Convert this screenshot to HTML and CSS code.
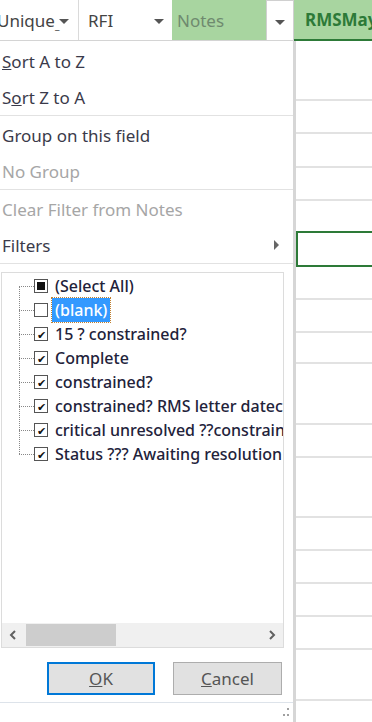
FILE: index.html
```html
<!DOCTYPE html>
<html>
<head>
    <title>Notes filter</title>
    <link rel="stylesheet" href="styles.css">
</head>
<body>
    <div class="header">
        <div class="hcell h-unique"><span class="htext">Unique<span class="cut">_</span></span><span class="arrow"></span></div>
        <div class="hcell h-rfi"><span class="htext">RFI</span><span class="arrow"></span></div>
        <div class="hcell h-notes"><span class="htext">Notes</span></div>
        <div class="hbtn"><span class="arrow"></span></div>
        <div class="hcell h-rms"><span class="htext">RMSMay</span></div>
    </div>

    <div class="main">
        <div class="menu">
            <div class="item"><u>S</u>ort A to Z</div>
            <div class="item">S<u>o</u>rt Z to A</div>
            <div class="sep"></div>
            <div class="item">Group on this field</div>
            <div class="item disabled">No Group</div>
            <div class="sep"></div>
            <div class="item disabled">Clear Filter from Notes</div>
            <div class="item has-sub">Filters <span class="sub-arrow"></span></div>
            <div class="sep"></div>

            <div class="listbox">
                <div class="tree">
                    <div class="node"><span class="box"><span class="partial"></span></span><span class="label">(Select All)</span></div>
                    <div class="node"><span class="box"></span><span class="label selected">(blank)</span></div>
                    <div class="node"><span class="box checked">&#10004;</span><span class="label">15 ? constrained?</span></div>
                    <div class="node"><span class="box checked">&#10004;</span><span class="label">Complete</span></div>
                    <div class="node"><span class="box checked">&#10004;</span><span class="label">constrained?</span></div>
                    <div class="node"><span class="box checked">&#10004;</span><span class="label">constrained? RMS letter datec</span></div>
                    <div class="node"><span class="box checked">&#10004;</span><span class="label">critical unresolved ??constrain</span></div>
                    <div class="node"><span class="box checked">&#10004;</span><span class="label">Status ??? Awaiting resolution</span></div>
                </div>
                <div class="hscroll">
                    <span class="sarrow">
                        <svg width="10" height="10" viewBox="0 0 10 10"><path d="M7 1 L3 5 L7 9" fill="none" stroke="#606060" stroke-width="2"/></svg>
                    </span>
                    <div class="track"><div class="thumb"></div></div>
                    <span class="sarrow">
                        <svg width="10" height="10" viewBox="0 0 10 10"><path d="M3 1 L7 5 L3 9" fill="none" stroke="#606060" stroke-width="2"/></svg>
                    </span>
                </div>
            </div>

            <div class="buttons">
                <button class="btn btn-ok"><u>O</u>K</button>
                <button class="btn"><u>C</u>ancel</button>
            </div>
            <div class="grip">
                <svg width="10" height="10" viewBox="0 0 10 10">
                    <rect x="7" y="0" width="2" height="2" fill="#a0a0a0"/>
                    <rect x="3" y="6" width="2" height="2" fill="#a0a0a0"/>
                    <rect x="7" y="6" width="2" height="2" fill="#a0a0a0"/>
                </svg>
            </div>
        </div>

        <div class="grid">
            <div class="row" style="height:60px"></div>
            <div class="row" style="height:33px"></div>
            <div class="row" style="height:34px"></div>
            <div class="row" style="height:33px"></div>
            <div class="row" style="height:32px"></div>
            <div class="row active" style="height:36px"></div>
            <div class="row" style="height:33px"></div>
            <div class="row" style="height:33px"></div>
            <div class="row" style="height:31px"></div>
            <div class="row" style="height:61px"></div>
            <div class="row" style="height:33px"></div>
            <div class="row" style="height:60px"></div>
            <div class="row" style="height:33px"></div>
            <div class="row" style="height:33px"></div>
            <div class="row" style="height:33px"></div>
            <div class="row" style="height:33px"></div>
            <div class="row" style="height:51px"></div>
            <div class="row last"></div>
        </div>
    </div>
</body>
</html>
```

FILE: styles.css
```css
* {
    box-sizing: border-box;
}
body {
    margin: 0;
    width: 372px;
    height: 722px;
    overflow: hidden;
    background: #fff;
    font-family: "Noto Sans", "Open Sans", sans-serif;
    color: #333;
}

/* column headers */
.header {
    display: flex;
    height: 41px;
    border-bottom: 1px solid #d4d4d4;
    white-space: nowrap;
}
.hcell {
    display: flex;
    align-items: center;
    flex-shrink: 0;
    font-size: 17px;
    color: #444;
    overflow: hidden;
}
.h-unique {
    width: 79px;
    border-right: 1px solid #dadada;
    justify-content: space-between;
    padding-right: 9px;
}
.h-unique .htext {
    margin-left: -3px;
}
.cut {
    font-size: 10px;
    vertical-align: bottom;
}
.h-rfi {
    width: 93px;
    padding: 0 8px 0 9px;
    justify-content: space-between;
}
.h-notes {
    width: 94px;
    background: #a8d5a0;
    padding-left: 5px;
    color: #6f8a6f;
}
.hbtn {
    width: 28px;
    flex-shrink: 0;
    display: flex;
    align-items: center;
    justify-content: center;
    border: 1px solid #d0d0d0;
    border-bottom: none;
    background: #fff;
}
.h-rms {
    flex: 1;
    background: #a8d5a0;
    padding-left: 11px;
    color: #2d7a38;
    font-weight: bold;
    border-bottom: 2px solid #2d7a38;
    margin-bottom: -1px;
}
.arrow {
    width: 0;
    height: 0;
    border-left: 5px solid transparent;
    border-right: 5px solid transparent;
    border-top: 5px solid #555;
    margin-top: 3px;
}

.main {
    display: flex;
    height: 681px;
}

/* filter menu */
.menu {
    width: 296px;
    flex-shrink: 0;
    display: flex;
    flex-direction: column;
    border-right: 3px solid #d6d6d6;
    padding-top: 2px;
}
.item {
    height: 36px;
    flex-shrink: 0;
    display: flex;
    align-items: center;
    padding-left: 2px;
    font-size: 17px;
    color: #3a3a4a;
}
.item.disabled {
    color: #a6a6a6;
}
.has-sub {
    justify-content: space-between;
    padding-right: 14px;
}
.sub-arrow {
    width: 0;
    height: 0;
    border-top: 5px solid transparent;
    border-bottom: 5px solid transparent;
    border-left: 5px solid #666;
}
.sep {
    height: 1px;
    flex-shrink: 0;
    background: #e2e2e2;
    margin: 0 0 1px 0;
}

.listbox {
    margin: 7px 9px 0 1px;
    height: 376px;
    flex-shrink: 0;
    border: 1px solid #dcdcdc;
    display: flex;
    flex-direction: column;
}
.tree {
    flex: 1;
    padding-top: 1px;
    position: relative;
    overflow: hidden;
}
.tree::before {
    content: "";
    position: absolute;
    left: 17px;
    top: 13px;
    height: 168px;
    border-left: 1px dotted #888;
}
.node {
    height: 24px;
    display: flex;
    align-items: center;
    padding-left: 17px;
    white-space: nowrap;
}
.node::before {
    content: "";
    width: 15px;
    flex-shrink: 0;
    border-top: 1px dotted #888;
}
.box {
    width: 14px;
    height: 14px;
    border: 1px solid #555;
    background: #fff;
    display: flex;
    align-items: center;
    justify-content: center;
    font-size: 11px;
    line-height: 1;
    color: #111;
    flex-shrink: 0;
}
.partial {
    width: 8px;
    height: 8px;
    background: #111;
}
.label {
    margin-left: 4px;
    padding: 1px 3px;
    font-size: 16px;
    color: #22223a;
    font-weight: 500;
    flex-shrink: 0;
}
.label.selected {
    background: #3399ff;
    color: #fff;
    outline: 1px dotted #c08030;
}
.hscroll {
    height: 24px;
    flex-shrink: 0;
    display: flex;
    align-items: center;
    background: #f0f0f0;
}
.sarrow {
    width: 22px;
    display: flex;
    justify-content: center;
}
.track {
    flex: 1;
    height: 22px;
}
.thumb {
    width: 90px;
    height: 22px;
    background: #cdcdcd;
    margin-left: 2px;
}

.buttons {
    display: flex;
    justify-content: flex-end;
    gap: 18px;
    padding: 14px 11px 0 0;
    height: 55px;
    flex-shrink: 0;
    border-bottom: 1px solid #dde3ea;
}
.btn {
    width: 109px;
    height: 33px;
    background: #e1e1e1;
    border: 1px solid #adadad;
    font-family: inherit;
    font-size: 17px;
    color: #555;
    padding: 0;
}
.btn-ok {
    width: 108px;
    border: 2px solid #0078d7;
}
.grip {
    flex: 1;
    display: flex;
    justify-content: flex-end;
    align-items: flex-end;
    padding: 0 3px 4px 0;
}

/* sheet cells to the right */
.grid {
    flex: 1;
    display: flex;
    flex-direction: column;
}
.row {
    border-bottom: 2px solid #e2e2e2;
    flex-shrink: 0;
}
.row.active {
    border: 2px solid #2d7a38;
    border-right: none;
    margin-top: -2px;
}
.row.last {
    flex: 1;
    border-bottom: none;
}
```
